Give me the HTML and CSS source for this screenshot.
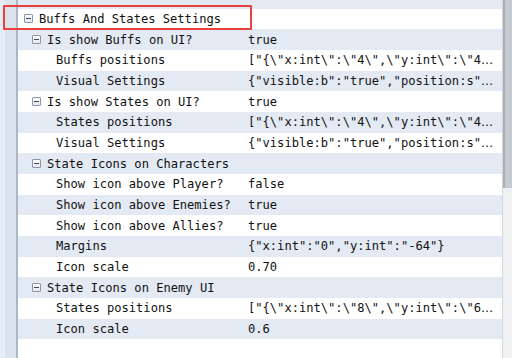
FILE: index.html
```html
<!DOCTYPE html>
<html lang="en">
<head>
    <meta charset="UTF-8">
    <title>Plugin Parameters</title>
    <link rel="stylesheet" href="styles.css">
</head>
<body>
    <div class="panel">
        <div class="gutter"></div>

        <!-- parameter tree -->
        <div class="tree">
            <div class="row stub"></div>
            <div class="row l1"><span class="name"><i class="toggle"></i>Buffs And States Settings</span><span class="value"></span></div>
            <div class="row l2"><span class="name"><i class="toggle"></i>Is show Buffs on UI?</span><span class="value">true</span></div>
            <div class="row l3"><span class="name">Buffs positions</span><span class="value">["{\"x:int\":\"4\",\"y:int\":\"4<span class="more">…</span></span></div>
            <div class="row l3"><span class="name">Visual Settings</span><span class="value">{"visible:b":"true","position:s"<span class="more">…</span></span></div>
            <div class="row l2"><span class="name"><i class="toggle"></i>Is show States on UI?</span><span class="value">true</span></div>
            <div class="row l3"><span class="name">States positions</span><span class="value">["{\"x:int\":\"4\",\"y:int\":\"4<span class="more">…</span></span></div>
            <div class="row l3"><span class="name">Visual Settings</span><span class="value">{"visible:b":"true","position:s"<span class="more">…</span></span></div>
            <div class="row l2"><span class="name"><i class="toggle"></i>State Icons on Characters</span><span class="value"></span></div>
            <div class="row l3"><span class="name">Show icon above Player?</span><span class="value">false</span></div>
            <div class="row l3"><span class="name">Show icon above Enemies?</span><span class="value">true</span></div>
            <div class="row l3"><span class="name">Show icon above Allies?</span><span class="value">true</span></div>
            <div class="row l3"><span class="name">Margins</span><span class="value">{"x:int":"0","y:int":"-64"}</span></div>
            <div class="row l3"><span class="name">Icon scale</span><span class="value">0.70</span></div>
            <div class="row l2"><span class="name"><i class="toggle"></i>State Icons on Enemy UI</span><span class="value"></span></div>
            <div class="row l3"><span class="name">States positions</span><span class="value">["{\"x:int\":\"8\",\"y:int\":\"6<span class="more">…</span></span></div>
            <div class="row l3"><span class="name">Icon scale</span><span class="value">0.6</span></div>
        </div>

        <div class="scrollbar"><div class="thumb"></div></div>

        <!-- selection marker drawn over the first group -->
        <div class="highlight"></div>
    </div>
</body>
</html>
```
FILE: styles.css
```css
html, body {
    margin: 0;
    padding: 0;
    background: #ffffff;
}
body {
    font-family: "DejaVu Sans Mono", "Liberation Mono", monospace;
    font-size: 12.1px;
    color: #111111;
}
.panel {
    position: relative;
    display: flex;
    width: 512px;
    height: 358px;
    overflow: hidden;
}
.gutter {
    width: 16px;
    flex: none;
    background: linear-gradient(to right, #e6edf5 0, #e6edf5 5px, #d9e2ed 5px);
    border-right: 2px solid #aab7c7;
}
.tree {
    flex: 1;
    display: flex;
    flex-direction: column;
}
.row {
    display: flex;
    align-items: center;
    height: 20.67px;
    flex: none;
    white-space: nowrap;
}
.row:nth-child(odd) {
    background: #e3eaf3;
}
.row.stub {
    height: 8.67px;
}
.name {
    width: 230px;
    flex: none;
    display: flex;
    align-items: center;
    box-sizing: border-box;
}
.l1 .name { padding-left: 6px; }
.l2 .name { padding-left: 14px; }
.l3 .name { padding-left: 38px; }
.value {
    width: 254px;
}
.more {
    font-family: "DejaVu Sans", sans-serif;
    letter-spacing: 1px;
}
.toggle {
    position: relative;
    width: 7px;
    height: 7px;
    margin-right: 6px;
    margin-top: -1px;
    border: 1px solid #8a97a8;
    border-radius: 1px;
    background: linear-gradient(#ffffff, #e4e9f0);
}
.toggle::after {
    content: "";
    position: absolute;
    left: 1px;
    top: 3px;
    width: 5px;
    height: 1px;
    background: #3b4a5c;
}
.scrollbar {
    width: 9px;
    flex: none;
    background: #f0f1f3;
    border-left: 1px solid #d3d7dc;
}
.thumb {
    height: 188px;
    background: #c6cbd1;
    border-left: 2px solid #a9afb7;
}
.highlight {
    position: absolute;
    left: 3px;
    top: 5px;
    width: 245px;
    height: 21px;
    border: 2px solid #e8413f;
    border-radius: 1px;
}
```
